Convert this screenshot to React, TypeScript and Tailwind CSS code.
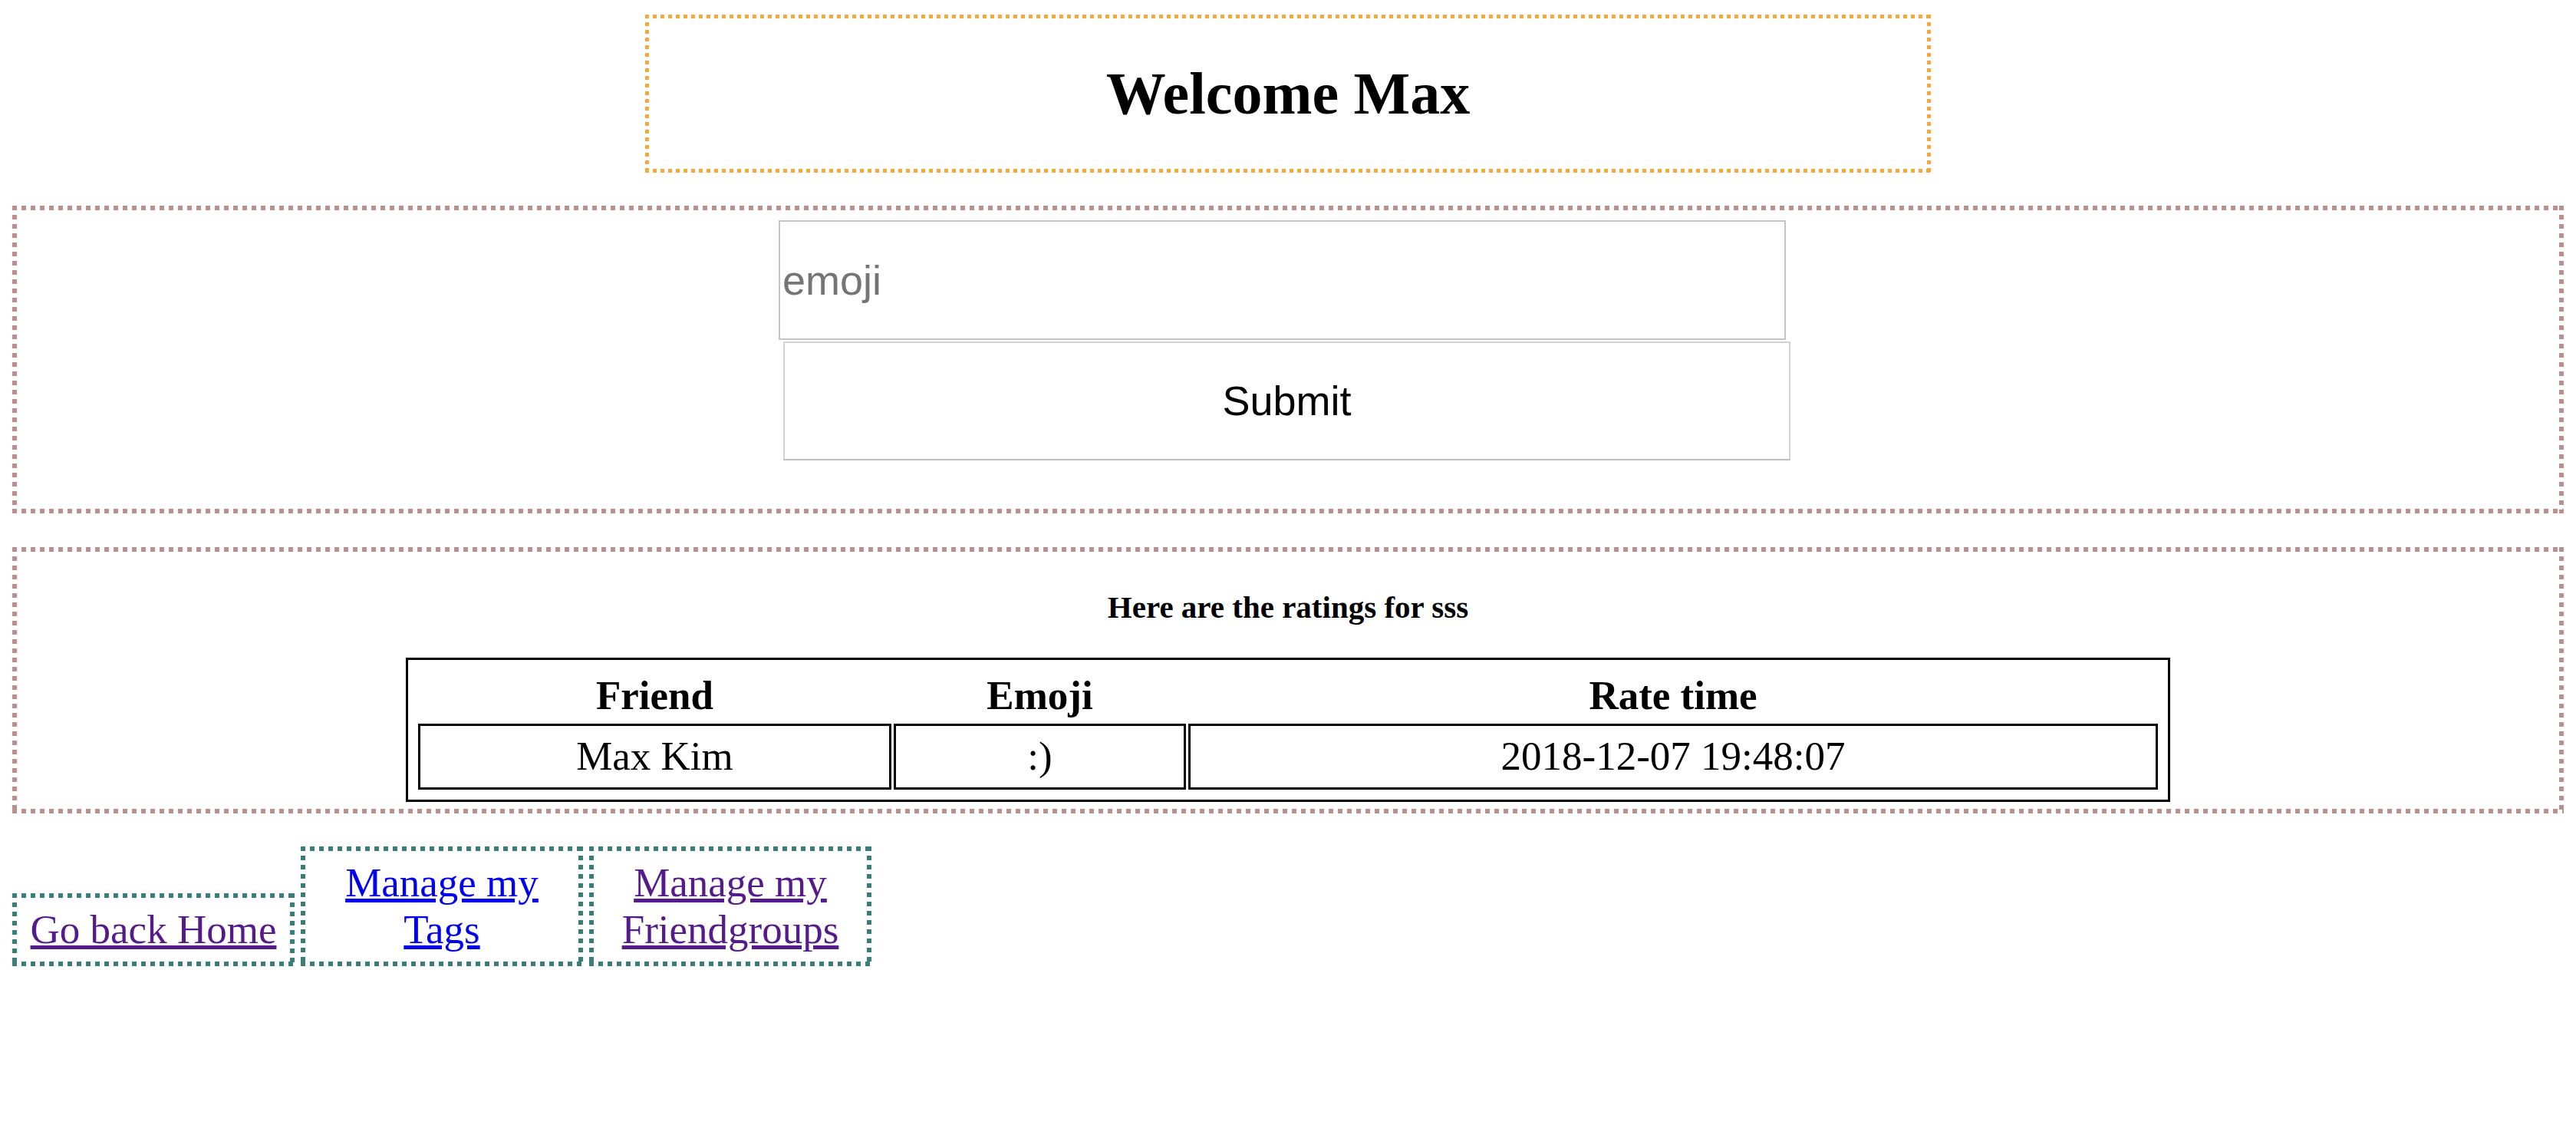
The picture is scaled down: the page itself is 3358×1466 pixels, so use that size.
import React from 'react';

const serif = "font-['Liberation_Serif','Times_New_Roman',serif]";
const sans = "font-['Liberation_Sans',Arial,sans-serif]";

// square-dotted borders (the browser's own dotted style draws round dots)
const orangeDots =
  'border-[5px] border-transparent [background:linear-gradient(90deg,#f5a83b_5px,transparent_0)_top_left/10px_5px_repeat-x_border-box,linear-gradient(90deg,#f5a83b_5px,transparent_0)_bottom_left/10px_5px_repeat-x_border-box,linear-gradient(#f5a83b_5px,transparent_0)_top_left/5px_10px_repeat-y_border-box,linear-gradient(#f5a83b_5px,transparent_0)_top_right/5px_10px_repeat-y_border-box]';
const roseDots =
  'border-[6px] border-transparent [background:linear-gradient(90deg,#bc8f8f_6px,transparent_0)_top_left/12px_6px_repeat-x_border-box,linear-gradient(90deg,#bc8f8f_6px,transparent_0)_bottom_left/12px_6px_repeat-x_border-box,linear-gradient(#bc8f8f_6px,transparent_0)_top_left/6px_12px_repeat-y_border-box,linear-gradient(#bc8f8f_6px,transparent_0)_top_right/6px_12px_repeat-y_border-box]';
const tealDots =
  'border-[6px] border-transparent [background:linear-gradient(90deg,#397e79_6px,transparent_0)_top_left/12px_6px_repeat-x_border-box,linear-gradient(90deg,#397e79_6px,transparent_0)_bottom_left/12px_6px_repeat-x_border-box,linear-gradient(#397e79_6px,transparent_0)_top_left/6px_12px_repeat-y_border-box,linear-gradient(#397e79_6px,transparent_0)_top_right/6px_12px_repeat-y_border-box]';

export default function App() {
  return (
    <div className={`min-h-screen bg-white text-black ${serif}`}>
      {/* Title */}
      <div className="pt-[19px]">
        <div className={`mx-auto flex h-[206px] w-[1676px] items-center justify-center ${orangeDots}`}>
          <h1 className="text-[78px] font-bold leading-none">Welcome Max</h1>
        </div>
      </div>

      {/* Emoji form */}
      <form
        className={`mx-[16px] mt-[43px] flex h-[401px] flex-col items-center pt-[13px] ${roseDots}`}
        onSubmit={(e) => e.preventDefault()}
      >
        <input
          type="text"
          placeholder="emoji"
          className={`mr-[15px] h-[156px] w-[1313px] border-2 border-[#c4c4c4] bg-white px-[3px] text-[54px] text-black outline-none placeholder:text-[#757575] ${sans}`}
        />
        <button
          type="submit"
          className={`mr-[3px] mt-[2px] h-[155px] w-[1313px] border-2 border-[#d2d2d2] border-b-[#bdbdbd] bg-white text-[54px] text-black ${sans}`}
        >
          Submit
        </button>
      </form>

      {/* Ratings */}
      <section className={`mx-[16px] mt-[44px] h-[347px] pt-[52px] ${roseDots}`}>
        <h4 className="text-center text-[41px] font-bold leading-none">Here are the ratings for sss</h4>
        <table className="mx-auto mt-[45px] w-[2300px] table-fixed border-separate border-spacing-[3px] border-[3px] border-black p-[10px] text-[53px] leading-[61px]">
          <colgroup>
            <col className="w-[617px]" />
            <col className="w-[381px]" />
            <col className="w-[1264px]" />
          </colgroup>
          <thead>
            <tr>
              <th className="py-[3px] font-bold">Friend</th>
              <th className="py-[3px] font-bold">Emoji</th>
              <th className="py-[3px] font-bold">Rate time</th>
            </tr>
          </thead>
          <tbody>
            <tr>
              <td className="border-[3px] border-black pt-[9px] pb-[10px] text-center">Max Kim</td>
              <td className="border-[3px] border-black pt-[9px] pb-[10px] text-center">:)</td>
              <td className="border-[3px] border-black pt-[9px] pb-[10px] text-center">2018-12-07 19:48:07</td>
            </tr>
          </tbody>
        </table>
      </section>

      {/* Links */}
      <nav className="ml-[16px] mt-[43px] flex items-end gap-[8px] text-[53px] leading-[61px]">
        <div className={`w-[368px] px-[12px] py-[11px] text-center ${tealDots}`}>
          <a href="#" className="text-[#551a8b] underline">Go back Home</a>
        </div>
        <div className={`w-[368px] px-[12px] py-[11px] text-center ${tealDots}`}>
          <a href="#" className="text-[#0000ee] underline">Manage my Tags</a>
        </div>
        <div className={`w-[368px] px-[12px] py-[11px] text-center ${tealDots}`}>
          <a href="#" className="text-[#551a8b] underline">Manage my Friendgroups</a>
        </div>
      </nav>
    </div>
  );
}
